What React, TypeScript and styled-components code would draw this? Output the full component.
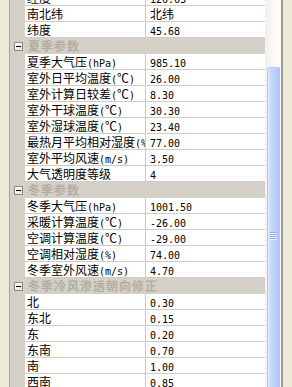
import React from 'react';
import styled, {createGlobalStyle} from 'styled-components';

type Item =
  | {kind: 'row'; label: string; value: string}
  | {kind: 'cat'; label: string};

const ITEMS: Item[] = [
  {kind: 'row', label: '经度', value: '126.63'},
  {kind: 'row', label: '南北纬', value: '北纬'},
  {kind: 'row', label: '纬度', value: '45.68'},
  {kind: 'cat', label: '夏季参数'},
  {kind: 'row', label: '夏季大气压(hPa)', value: '985.10'},
  {kind: 'row', label: '室外日平均温度(℃)', value: '26.00'},
  {kind: 'row', label: '室外计算日较差(℃)', value: '8.30'},
  {kind: 'row', label: '室外干球温度(℃)', value: '30.30'},
  {kind: 'row', label: '室外湿球温度(℃)', value: '23.40'},
  {kind: 'row', label: '最热月平均相对湿度(%)', value: '77.00'},
  {kind: 'row', label: '室外平均风速(m/s)', value: '3.50'},
  {kind: 'row', label: '大气透明度等级', value: '4'},
  {kind: 'cat', label: '冬季参数'},
  {kind: 'row', label: '冬季大气压(hPa)', value: '1001.50'},
  {kind: 'row', label: '采暖计算温度(℃)', value: '-26.00'},
  {kind: 'row', label: '空调计算温度(℃)', value: '-29.00'},
  {kind: 'row', label: '空调相对湿度(%)', value: '74.00'},
  {kind: 'row', label: '冬季室外风速(m/s)', value: '4.70'},
  {kind: 'cat', label: '冬季冷风渗透朝向修正'},
  {kind: 'row', label: '北', value: '0.30'},
  {kind: 'row', label: '东北', value: '0.15'},
  {kind: 'row', label: '东', value: '0.20'},
  {kind: 'row', label: '东南', value: '0.70'},
  {kind: 'row', label: '南', value: '1.00'},
  {kind: 'row', label: '西南', value: '0.85'},
  {kind: 'row', label: '西', value: '0.70'},
];

const GlobalStyle = createGlobalStyle`
  html, body {
    margin: 0;
    padding: 0;
    background: #ece9d8;
  }
  body {
    font-family: "Noto Sans CJK SC", sans-serif;
    font-size: 12px;
  }
`;

const Frame = styled.div`
  display: flex;
  width: 292px;
  height: 387px;
  overflow: hidden;
  background: #ece9d8;
`;

const LeftEdge = styled.div`
  width: 9px;
  flex: none;
  background: #ece9d8;
  border-right: 1px solid #a7a69d;
`;

const Grid = styled.div`
  flex: none;
  width: 255px;
  display: flex;
  flex-direction: column;
  overflow: hidden;
  background: #d4d0c8;
`;

const List = styled.div`
  display: flex;
  flex-direction: column;
  margin-top: -10px;
`;

const Row = styled.div<{$cat?: boolean}>`
  display: flex;
  height: 16px;
  flex: none;
  background: ${p => (p.$cat ? '#d4d0c8' : '#ffffff')};
`;

const Margin = styled.div`
  width: 15px;
  flex: none;
  display: flex;
  align-items: center;
  justify-content: center;
  background: #d4d0c8;
`;

const Toggle = styled.span`
  width: 9px;
  height: 9px;
  box-sizing: border-box;
  border: 1px solid #8c8a80;
  background: linear-gradient(135deg, #ffffff, #e6e3da);
  display: flex;
  align-items: center;
  justify-content: center;
  margin-left: 2px;
  margin-top: 1px;

  &::after {
    content: '';
    width: 5px;
    height: 1px;
    background: #000000;
  }
`;

const Label = styled.div`
  width: 121px;
  flex: none;
  box-sizing: border-box;
  padding-left: 2px;
  border-bottom: 1px solid #cfccc4;
  border-right: 1px solid #cfccc4;
  line-height: 15px;
  white-space: nowrap;
  overflow: hidden;
  color: #000000;
`;

const Value = styled.div`
  flex: 1;
  box-sizing: border-box;
  padding-left: 4px;
  border-bottom: 1px solid #cfccc4;
  line-height: 15px;
  white-space: nowrap;
  overflow: hidden;
  color: #000000;
`;

/* half-width run: SimSun gives every ASCII glyph a 6px cell */
const Half = styled.span`
  font-family: "DejaVu Sans Mono", monospace;
  font-size: 10px;
`;

const CatTitle = styled.div`
  flex: 1;
  padding-left: 3px;
  line-height: 16px;
  font-weight: 700;
  letter-spacing: 1px;
  color: #b2aea2;
  white-space: nowrap;
  overflow: hidden;
`;

const Track = styled.div`
  width: 16px;
  flex: none;
  display: flex;
  flex-direction: column;
  padding: 0 1px 0 2px;
  box-sizing: border-box;
  background: linear-gradient(90deg, #f3f1ec, #fefefb);
`;

const Thumb = styled.div`
  margin-top: 67px;
  flex: 1;
  border-radius: 2px 2px 0 0;
  border: 1px solid #b4c8f6;
  border-bottom: none;
  background: linear-gradient(90deg, #e3ebfe 0%, #c6d6fd 25%, #bccffb 75%, #a9bff2 100%);
  display: flex;
  flex-direction: column;
  align-items: center;
  padding-top: 164px;
`;

const Grip = styled.span`
  width: 7px;
  height: 1px;
  margin-bottom: 1px;
  background: #8faaed;
  box-shadow: 0 1px 0 #eef3fe;
`;

const RightEdge = styled.div`
  flex: 1;
  background: #ece9d8;
  border-left: 2px solid #9a998f;
`;

const Mixed: React.FC<{text: string}> = ({text}) => (
  <>
    {text
      .split(/([\x20-\x7e]+)/)
      .filter(Boolean)
      .map((part, i) =>
        /^[\x20-\x7e]+$/.test(part) ? <Half key={i}>{part}</Half> : <span key={i}>{part}</span>,
      )}
  </>
);

export default function App() {
  return (
    <Frame>
      <GlobalStyle />
      <LeftEdge />
      <Grid>
        <List>
          {ITEMS.map((it, i) =>
            it.kind === 'cat' ? (
              <Row key={i} $cat>
                <Margin>
                  <Toggle />
                </Margin>
                <CatTitle>{it.label}</CatTitle>
              </Row>
            ) : (
              <Row key={i}>
                <Margin />
                <Label>
                  <Mixed text={it.label} />
                </Label>
                <Value>
                  <Mixed text={it.value} />
                </Value>
              </Row>
            ),
          )}
        </List>
      </Grid>
      <Track>
        <Thumb>
          <Grip />
          <Grip />
          <Grip />
          <Grip />
        </Thumb>
      </Track>
      <RightEdge />
    </Frame>
  );
}
